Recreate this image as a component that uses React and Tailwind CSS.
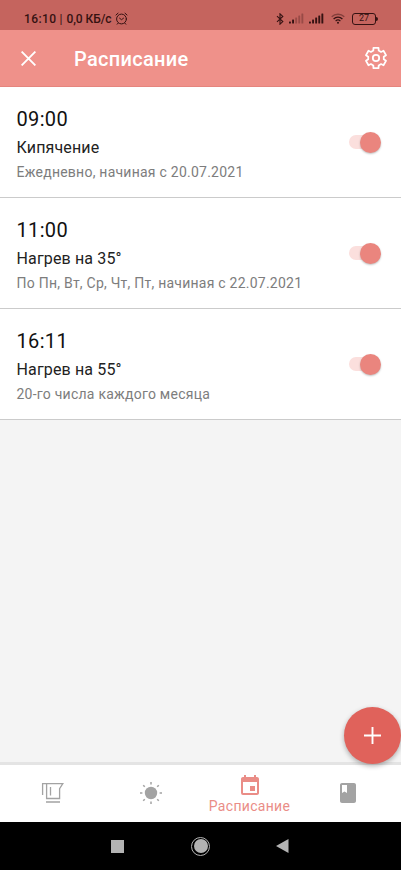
import { MdBook, MdEvent } from 'react-icons/md';

const schedule = [
  { id: 1, time: '09:00', title: 'Кипячение', repeat: 'Ежедневно, начиная с 20.07.2021' },
  { id: 2, time: '11:00', title: 'Нагрев на 35°', repeat: 'По Пн, Вт, Ср, Чт, Пт, начиная с 22.07.2021' },
  { id: 3, time: '16:11', title: 'Нагрев на 55°', repeat: '20-го числа каждого месяца' },
];

const AlarmIcon = () => (
  <svg className="ml-[3px] h-[13px] w-[13px]" viewBox="0 0 13 13" fill="none" stroke="currentColor" strokeLinecap="round">
    <circle cx="6.5" cy="7" r="4.9" />
    <path d="M1 3 3 1.2M12 3 10 1.2M4.6 6.2l1.9 1.5 2-1.5M3 11.3l-.8.9M10 11.3l.8.9" />
  </svg>
);

const BluetoothIcon = () => (
  <svg className="h-[12px] w-[8px]" viewBox="0 0 8 12" fill="none" stroke="currentColor" strokeWidth="1.1">
    <path d="M1 3.2 6.8 8.6 4 11.2V.8l2.8 2.6L1 8.8" />
  </svg>
);

const SignalIcon = ({ level }) => (
  <svg className="h-[11px] w-[15px]" viewBox="0 0 15 11" fill="currentColor">
    {[0, 1, 2, 3, 4].map((bar) => (
      <rect
        key={bar}
        x={bar * 3.1}
        y={8.6 - bar * 2}
        width="1.9"
        height={1.9 + bar * 2}
        rx="0.5"
        opacity={bar < level ? 1 : 0.3}
      />
    ))}
  </svg>
);

const WifiIcon = () => (
  <svg className="h-[11px] w-[14px]" viewBox="0 0 14 11" fill="none" stroke="currentColor" strokeWidth="1.3">
    <path d="M.7 3.8a9 9 0 0 1 12.6 0" opacity="0.45" />
    <path d="M2.6 6a6.3 6.3 0 0 1 8.8 0M4.6 8.1a3.4 3.4 0 0 1 4.8 0" />
    <circle cx="7" cy="9.8" r="1" fill="currentColor" stroke="none" />
  </svg>
);

const Battery = () => (
  <div className="flex items-center">
    <div className="flex h-[12px] w-[24px] items-center justify-center rounded-[3px] border border-[#351212] text-[9px] leading-none">
      27
    </div>
    <div className="h-[4px] w-[2px] rounded-r-sm bg-[#351212]" />
  </div>
);

const StatusBar = () => (
  <div className="flex h-[30px] shrink-0 items-center bg-[#c5645e] pt-[7px] pr-[23px] pl-[24px] text-[#351212]">
    <span className="text-[12px] font-medium tracking-[0.4px]">16:10</span>
    <span className="ml-[3px] text-[12px]">|</span>
    <span className="ml-[4px] text-[12px] font-medium tracking-[-0.05px]">0,0 КБ/с</span>
    <AlarmIcon />
    <div className="ml-auto flex items-center">
      <BluetoothIcon />
      <div className="ml-[5px] flex">
        <SignalIcon level={2} />
      </div>
      <div className="ml-[5px] flex">
        <SignalIcon level={5} />
      </div>
      <div className="mr-[7px] ml-[7px] flex">
        <WifiIcon />
      </div>
      <Battery />
    </div>
  </div>
);

const GearIcon = () => (
  <svg className="ml-auto h-[24px] w-[24px]" viewBox="0 0 24 24" fill="none" stroke="currentColor" strokeWidth="1.8" strokeLinejoin="round">
    <path d="M9.48 1.91h5.04l.18 2.67 2.38 1.37 2.4-1.17L22 9.13l-2.22 1.5v2.74l2.22 1.5-2.52 4.35-2.4-1.17-2.38 1.37-.18 2.67H9.48l-.18-2.67-2.38-1.37-2.4 1.17L2 14.87l2.22-1.5v-2.74L2 9.13l2.52-4.35 2.4 1.17L9.3 4.58z" />
    <circle cx="12" cy="12" r="3.2" />
  </svg>
);

const Header = () => (
  <header className="flex h-[57px] shrink-0 items-center border-b border-[#e5857e] bg-[#ef918a] pr-[13px] pl-[21px] text-white">
    <svg className="h-[15px] w-[15px]" viewBox="0 0 15 15" stroke="currentColor" strokeWidth="1.9">
      <path d="M.6.6l13.8 13.8M14.4.6.6 14.4" />
    </svg>
    <h1 className="ml-[38px] pt-[2px] text-[20px] font-medium tracking-[0.3px]">Расписание</h1>
    <GearIcon />
  </header>
);

const Toggle = () => (
  <div className="flex h-[22px] w-[32px] items-center justify-end rounded-full">
    <div className="-mr-[14px] h-[14px] w-[25px] rounded-full bg-[#fbdfdd]" />
    <div className="h-[21px] w-[21px] rounded-full bg-[#ea857e] shadow-[0_1px_2px_rgba(0,0,0,0.25)]" />
  </div>
);

const ScheduleRow = ({ item }) => (
  <div className="flex h-[111px] items-center justify-between border-b border-[#cbcbcb] bg-white pr-[20px] pl-[16.5px]">
    <div className="pt-[4px]">
      <p className="text-[20px] leading-[28px] tracking-[0.35px] text-[#111]">{item.time}</p>
      <p className="mt-[3px] text-[16px] leading-[24px] tracking-[0.15px] text-[#222]">{item.title}</p>
      <p className="text-[14px] leading-[24px] tracking-[0.24px] text-[#7d7d7d]">{item.repeat}</p>
    </div>
    <Toggle />
  </div>
);

const KettleIcon = () => (
  <svg className="h-[22px] w-[23px]" viewBox="0 0 23 22" fill="none" stroke="currentColor" strokeWidth="1.3">
    <path d="M1.6 13V1.6h20.2l-3.2 5v9.9H5.6V1.6M9.5 5v8.5M5 20h14" />
  </svg>
);

const SunIcon = () => (
  <svg className="h-[24px] w-[24px]" viewBox="0 0 24 24" stroke="currentColor" strokeWidth="1.5">
    <circle cx="12" cy="12" r="6.2" fill="currentColor" stroke="none" />
    <path d="M12 1v2.4M12 20.6V23M1 12h2.4M20.6 12H23M4.2 4.2l1.6 1.6M18.2 18.2l1.6 1.6M4.2 19.8l1.6-1.6M18.2 5.8l1.6-1.6" />
  </svg>
);

const TabBar = () => (
  <nav className="relative grid h-[60px] shrink-0 grid-cols-[105px_92px_105px_99px] border-t-[3px] border-[#e4e4e4] bg-white text-[#a3a3a3]">
    <div className="flex items-center justify-center pb-[2px]">
      <KettleIcon />
    </div>
    <div className="flex items-center justify-center pb-[1px]">
      <SunIcon />
    </div>
    <div className="flex flex-col items-center pt-[9px] text-[#ea8d87]">
      <MdEvent className="h-[24px] w-[24px]" />
      <span className="text-[14px] leading-[16px] tracking-[0.3px]">Расписание</span>
    </div>
    <div className="flex items-center pb-[2px] pl-[34px]">
      <MdBook className="h-[24px] w-[24px]" />
    </div>
    <button
      type="button"
      aria-label="Добавить"
      className="absolute right-0 bottom-[58px] flex h-[57px] w-[57px] items-center justify-center rounded-full bg-[#e0625b] text-white shadow-[0_2px_5px_rgba(0,0,0,0.3)]"
    >
      <svg className="h-[17px] w-[17px]" viewBox="0 0 17 17" stroke="currentColor" strokeWidth="1.9">
        <path d="M8.5 0v17M0 8.5h17" />
      </svg>
    </button>
  </nav>
);

const SystemNav = () => (
  <div className="flex h-[48px] shrink-0 items-center bg-black pl-[111px]">
    <div className="h-[13px] w-[13px] bg-[#b3b3b3]" />
    <div className="ml-[67px] flex h-[19px] w-[19px] items-center justify-center rounded-full border-[1.5px] border-[#b3b3b3]">
      <div className="h-[14px] w-[14px] rounded-full bg-[#b3b3b3]" />
    </div>
    <svg className="ml-[66px] h-[14px] w-[13px]" viewBox="0 0 13 14" fill="#b3b3b3">
      <path d="M0 7 12.5 0v14z" />
    </svg>
  </div>
);

const App = () => {
  return (
    <div className="flex h-[870px] w-[401px] flex-col overflow-hidden bg-[#f4f4f4] font-['Roboto',sans-serif]">
      <StatusBar />
      <Header />
      <main className="flex-1">
        {schedule.map((item) => (
          <ScheduleRow key={item.id} item={item} />
        ))}
      </main>
      <TabBar />
      <SystemNav />
    </div>
  );
};

export default App;
